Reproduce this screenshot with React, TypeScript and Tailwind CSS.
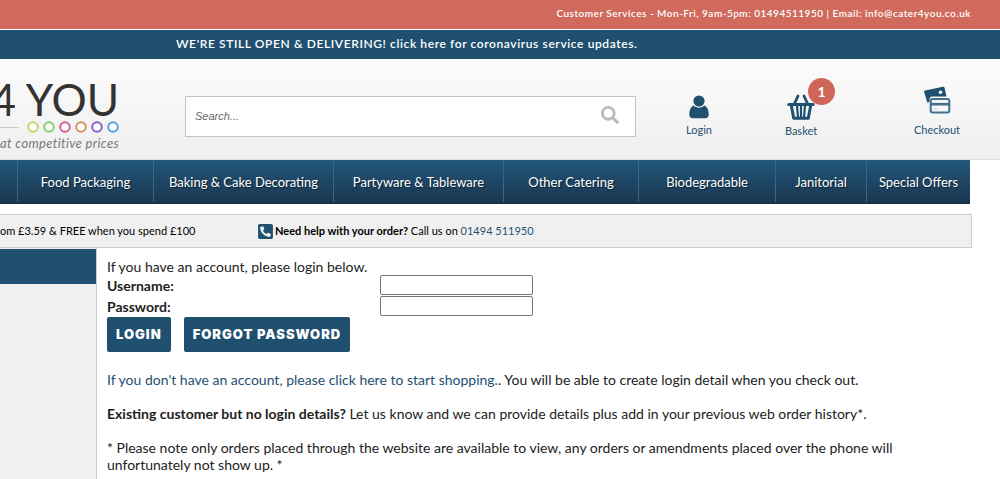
import { FaPhoneSquareAlt, FaSearch } from "react-icons/fa";

const navItems = [
  "Food Packaging",
  "Baking & Cake Decorating",
  "Partyware & Tableware",
  "Other Catering",
  "Biodegradable",
  "Janitorial",
  "Special Offers",
];

const logoRings = ["#c9d367", "#84cf6c", "#d0608c", "#d78f63", "#8a5fc8", "#5c9fdc"];

function UserIcon() {
  return (
    <svg viewBox="0 0 20 24" className="h-6 w-5" fill="currentColor" aria-hidden="true">
      <circle cx="10" cy="6" r="5.6" />
      <path d="M4.6 10.6C1.8 11.8.3 15 .3 19.5c0 2.6 1.3 3.8 3.6 3.8h12.2c2.3 0 3.6-1.2 3.6-3.8 0-4.500-1.500-7.700-4.300-8.900-1.400 1.400-3.200 2.100-5.400 2.100s-4-.7-5.400-2.100z" />
    </svg>
  );
}

function BasketIcon() {
  return (
    <svg viewBox="0 0 28 26" className="h-[26px] w-7" fill="none" stroke="currentColor" aria-hidden="true">
      <path d="M7.500 9.500 11 2M20.500 9.500 17 2" strokeWidth="2.800" strokeLinecap="round" />
      <path d="M1.800 10.500h24.400" strokeWidth="3" strokeLinecap="round" />
      <path d="M4.200 11l2.500 13.200h14.600L23.800 11" strokeWidth="3" strokeLinejoin="round" />
      <path d="M10 11.500l1 12M14 11.500v12M18 11.500l-1 12" strokeWidth="2.200" />
    </svg>
  );
}

function CardsIcon() {
  return (
    <svg viewBox="0 0 28 28" className="h-7 w-7" aria-hidden="true">
      <path
        d="M2.200 4.600 19.800.8c.9-.2 1.600.2 1.800 1.100l1.900 8.600H9.500c-2 0-3 1-3 3v2.600l-2.200.5L1.200 6.200c-.2-.9.1-1.400 1-1.600z"
        fill="#1f5070"
      />
      <circle cx="17.500" cy="6.200" r="1.800" fill="#f7f7f7" />
      <rect x="7.700" y="13" width="18.600" height="13.400" rx="2" fill="#f7f7f7" stroke="#41708d" strokeWidth="2" />
      <path d="M8 18.200h18" stroke="#41708d" strokeWidth="2.600" />
      <path d="M10.500 23h4" stroke="#c5d2da" strokeWidth="1" />
    </svg>
  );
}

function Logo() {
  return (
    <a href="#" className="flex w-[119px] shrink-0 flex-col items-end text-[#333]">
      <span className="text-[44px] leading-9 whitespace-nowrap">4 YOU</span>
      <span className="mt-1 flex w-full items-center gap-1">
        <span className="mr-1 h-px flex-1 bg-[#ccc]" />
        {logoRings.map((color) => (
          <svg key={color} viewBox="0 0 12 12" className="h-3 w-3" aria-hidden="true">
            <circle cx="6" cy="6" r="4.800" fill="#fff" stroke={color} strokeWidth="2" />
          </svg>
        ))}
      </span>
      <span className="text-[13px] leading-5 tracking-wide whitespace-nowrap text-[#777] italic">
        at competitive prices
      </span>
    </a>
  );
}

function Header() {
  return (
    <header className="flex items-start border-b border-[#ddd] bg-linear-to-b from-[#fcfcfc] to-[#efefef] pr-[39px] pb-[6px] text-[#1f5070]">
      <div className="pt-[22px]">
        <Logo />
      </div>
      <form className="mt-[37px] ml-[66px] flex h-[41px] flex-1 items-center border border-[#c4c4c4] bg-white pr-4">
        <input
          type="search"
          aria-label="Search"
          placeholder="Search..."
          className="h-full min-w-0 flex-1 px-[9px] pb-[2px] font-['Liberation_Sans'] text-[11px] italic outline-none placeholder:text-[#666]"
        />
        <button type="button" aria-label="Go">
          <FaSearch className="mb-1 h-[18px] w-[18px] text-[#bbb]" />
        </button>
      </form>
      <nav aria-label="Account" className="flex pl-12 text-[11px] leading-4">
        <a href="#" className="flex w-[30px] flex-col items-center gap-[3px] pt-9">
          <UserIcon />
          Login
        </a>
        <a href="#" className="relative ml-[68px] flex w-[38px] flex-col items-center gap-[3px] pt-[35px]">
          <BasketIcon />
          Basket
          <span className="absolute top-[19px] -right-[15px] flex h-[27px] w-[27px] items-center justify-center rounded-full bg-[#cf6658] text-sm font-bold text-white">
            1
          </span>
        </a>
        <a href="#" className="ml-[93px] flex w-12 flex-col items-center gap-2 pt-[27px]">
          <CardsIcon />
          Checkout
        </a>
      </nav>
    </header>
  );
}

function MainNav() {
  return (
    <nav
      aria-label="Categories"
      className="mr-[30px] grid h-11 grid-cols-[17fr_136fr_180fr_170fr_135fr_137fr_91fr_104fr] border-b-2 border-[#16304a] bg-linear-to-b from-[#24587b] to-[#1a3650]"
    >
      <span />
      {navItems.map((item) => (
        <a
          key={item}
          href="#"
          className="flex items-center justify-center border-l border-[#34698a] pt-1 text-[13px] whitespace-nowrap text-white text-shadow-[1px_1px_1px_#0c2233]"
        >
          {item}
        </a>
      ))}
    </nav>
  );
}

function InfoBar() {
  return (
    <div className="mt-[10px] mr-7 flex h-[34px] items-center border-y border-r border-[#ccc] bg-[#f0f0f0] text-[11px] text-black">
      <div className="w-[186px] shrink-0 whitespace-nowrap">om £3.59 &amp; FREE when you spend £100</div>
      <div className="ml-[71px] flex items-center whitespace-nowrap">
        <FaPhoneSquareAlt className="mr-px h-[17px] w-[17px] text-[#1f5070]" />
        <p>
          <strong>Need help with your order?</strong> Call us on{" "}
          <a href="#" className="text-[#1f5070]">
            01494 511950
          </a>
        </p>
      </div>
    </div>
  );
}

const inputClass = "h-5 w-[153px] rounded-xs border border-[#767676] bg-white px-1";
const buttonClass =
  "h-[35px] rounded-xs bg-[#1f5070] px-[9px] font-[Inter,sans-serif] text-[13px] font-black tracking-[1px] text-white";

function LoginForm() {
  return (
    <form>
      <p>If you have an account, please login below.</p>
      <div className="grid grid-cols-[273px_1fr] items-center gap-y-px">
        <label htmlFor="username" className="font-bold">
          Username:
        </label>
        <input id="username" type="text" className={inputClass} />
        <label htmlFor="password" className="font-bold">
          Password:
        </label>
        <input id="password" type="password" className={inputClass} />
      </div>
      <div className="mt-px flex gap-[13px]">
        <button type="button" className={buttonClass}>
          LOGIN
        </button>
        <button type="button" className={buttonClass}>
          FORGOT PASSWORD
        </button>
      </div>
    </form>
  );
}

export default function App() {
  return (
    <div className="flex min-h-screen flex-col overflow-hidden bg-white font-[Lato,sans-serif]">
      <div className="flex h-[29px] items-center justify-end bg-[#d06a5c] pr-[29px] pb-[2px] text-[10px] font-semibold tracking-wider text-white">
        Customer Services - Mon-Fri, 9am-5pm: 01494511950 | Email: info@cater4you.co.uk
      </div>
      <div className="mt-px flex h-[29px] items-center bg-[#1f5070] pb-[2px] pl-44 text-xs font-semibold tracking-wider text-white">
        <a href="#">WE'RE STILL OPEN &amp; DELIVERING! click here for coronavirus service updates.</a>
      </div>
      <Header />
      <MainNav />
      <InfoBar />
      <div className="flex flex-1">
        <aside className="w-[97px] shrink-0 border-r border-[#ccc] bg-[#f0f0f0]">
          <div className="mt-px h-[35px] bg-[#1f5070]" />
        </aside>
        <main className="flex-1 pt-[10px] pr-[60px] pl-[10px] text-sm leading-[17px] text-[#222]">
          <LoginForm />
          <p className="mt-[19px]">
            <a href="#" className="text-[#1f5070]">
              If you don't have an account, please click here to start shopping.
            </a>
            . You will be able to create login detail when you check out.
          </p>
          <p className="mt-[17px]">
            <strong>Existing customer but no login details?</strong> Let us know and we can provide details
            plus add in your previous web order history*.
          </p>
          <p className="mt-[17px]">
            * Please note only orders placed through the website are available to view, any orders or
            amendments placed over the phone will unfortunately not show up. *
          </p>
        </main>
      </div>
    </div>
  );
}
